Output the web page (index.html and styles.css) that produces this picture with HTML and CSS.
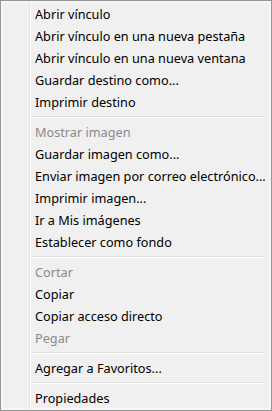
FILE: index.html
```html
<!DOCTYPE html>
<html lang="es">
<head>
<meta charset="utf-8">
<title>Menú contextual</title>
<link rel="stylesheet" href="styles.css">
</head>
<body>
<div class="menu">
  <ul class="list">
    <li class="item">Abrir vínculo</li>
    <li class="item">Abrir vínculo en una nueva pestaña</li>
    <li class="item">Abrir vínculo en una nueva ventana</li>
    <li class="item">Guardar destino como...</li>
    <li class="item">Imprimir destino</li>
    <li class="sep"></li>
    <li class="item disabled">Mostrar imagen</li>
    <li class="item">Guardar imagen como...</li>
    <li class="item">Enviar imagen por correo electrónico...</li>
    <li class="item">Imprimir imagen...</li>
    <li class="item">Ir a Mis imágenes</li>
    <li class="item">Establecer como fondo</li>
    <li class="sep"></li>
    <li class="item disabled">Cortar</li>
    <li class="item">Copiar</li>
    <li class="item">Copiar acceso directo</li>
    <li class="item disabled">Pegar</li>
    <li class="sep"></li>
    <li class="item">Agregar a Favoritos...</li>
    <li class="sep"></li>
    <li class="item">Propiedades</li>
  </ul>
</div>
</body>
</html>
```
FILE: styles.css
```css
html, body {
  margin: 0;
  padding: 0;
  background: #f0f0f0;
}
.menu {
  box-sizing: border-box;
  width: 272px;
  height: 411px;
  border: 1px solid #979797;
  background: #f0f0f0;
  box-shadow: inset 0 0 0 2px #f5f5f5;
  padding: 2px 2px 1px 2px;
  font-family: "Noto Sans", "Segoe UI", sans-serif;
  font-size: 12.7px;
  color: #000;
}
.list {
  list-style: none;
  margin: 0;
  padding: 0;
  height: 100%;
  background:
    linear-gradient(#e2e3e3, #e2e3e3) 26px 0 / 1px 100% no-repeat,
    linear-gradient(#ffffff, #ffffff) 27px 0 / 1px 100% no-repeat;
}
.item {
  height: 22px;
  line-height: 22px;
  padding-left: 32px;
  white-space: nowrap;
}
.disabled {
  color: #8a8a8a;
}
.sep {
  height: 8px;
  margin: 0 3px 0 28px;
  background:
    linear-gradient(#e0e0e0, #e0e0e0) 0 3px / 100% 1px no-repeat,
    linear-gradient(#ffffff, #ffffff) 0 4px / 100% 1px no-repeat;
}
```
